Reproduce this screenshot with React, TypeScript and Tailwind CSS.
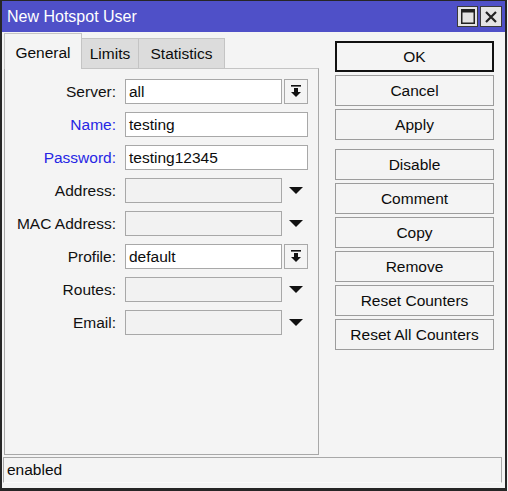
import type { ReactNode } from "react"

type Field = {
  label: string
  value?: string
  kind: "text" | "select" | "disabled"
  accent?: boolean
}

const FIELDS: Field[] = [
  { label: "Server:", value: "all", kind: "select" },
  { label: "Name:", value: "testing", kind: "text", accent: true },
  { label: "Password:", value: "testing12345", kind: "text", accent: true },
  { label: "Address:", kind: "disabled" },
  { label: "MAC Address:", kind: "disabled" },
  { label: "Profile:", value: "default", kind: "select" },
  { label: "Routes:", kind: "disabled" },
  { label: "Email:", kind: "disabled" },
]

const TOP_BUTTONS = ["OK", "Cancel", "Apply"]
const MORE_BUTTONS = ["Disable", "Comment", "Copy", "Remove", "Reset Counters", "Reset All Counters"]

function DropButton() {
  return (
    <div className="ml-[2px] flex h-[25px] w-[24px] items-center justify-center border border-[#a8a8a8] bg-[#f4f4f4]">
      <svg width="10" height="13" viewBox="0 0 10 13" aria-hidden>
        <rect x="0" y="0" width="10" height="1.6" fill="#111" />
        <rect x="3" y="3" width="4" height="4.5" fill="#111" />
        <polygon points="0,7 10,7 5,12" fill="#111" />
      </svg>
    </div>
  )
}

function PlainArrow() {
  return (
    <div className="ml-[2px] flex h-[25px] w-[24px] items-center justify-center">
      <svg width="14" height="7" viewBox="0 0 14 7" aria-hidden>
        <polygon points="0,0 14,0 7,7" fill="#111" />
      </svg>
    </div>
  )
}

function FormRow({ field }: { field: Field }) {
  let control: ReactNode
  if (field.kind === "text") {
    control = (
      <div className="flex h-[25px] w-[183px] items-center border border-[#a8a8a8] bg-white pl-[3px]">
        {field.value}
      </div>
    )
  } else if (field.kind === "select") {
    control = (
      <>
        <div className="flex h-[25px] w-[157px] items-center border border-[#a8a8a8] bg-white pl-[3px]">
          {field.value}
        </div>
        <DropButton />
      </>
    )
  } else {
    control = (
      <>
        <div className="h-[25px] w-[157px] border border-[#a8a8a8] bg-[#f2f2f2]" />
        <PlainArrow />
      </>
    )
  }

  return (
    <div className="flex h-[25px] items-center">
      <span
        className={
          "w-[111px] text-right " + (field.accent ? "text-[#2626e4]" : "text-[#111]")
        }
      >
        {field.label}
      </span>
      <div className="ml-[9px] flex items-center">{control}</div>
    </div>
  )
}

function WinButton({ label, isDefault }: { label: string; isDefault?: boolean }) {
  return (
    <button
      type="button"
      className={
        "flex h-[31px] w-full items-center justify-center bg-[#f4f4f4] text-[#0c0c0c] " +
        (isDefault ? "border-2 border-[#111]" : "border border-[#9c9c9c]")
      }
    >
      {label}
    </button>
  )
}

export default function App() {
  return (
    <div className="flex h-[491px] w-[508px] bg-[#f4f4f4] font-['Liberation_Sans',Arial,sans-serif] text-[15.5px] text-[#0c0c0c]">
      <div className="flex h-full w-[507px] flex-col border-b-[3px] border-l-2 border-r-2 border-t border-[#262626] bg-[#f4f4f4]">
        {/* title bar */}
        <div className="flex h-[31px] items-center justify-between bg-[#4f50c8] pl-[5px] pr-[3px]">
          <span className="text-[16px] text-white">New Hotspot User</span>
          <div className="flex gap-[2px]">
            <div className="flex h-[21px] w-[21px] items-center justify-center border border-[#3a3a3a] bg-[#e4e4e4]">
              <svg width="14" height="15" viewBox="0 0 14 15" aria-hidden>
                <rect x="0.75" y="0.75" width="12.5" height="13.5" fill="none" stroke="#222" strokeWidth="1.5" />
                <rect x="0" y="0" width="14" height="3.5" fill="#222" />
              </svg>
            </div>
            <div className="flex h-[21px] w-[22px] items-center justify-center border border-[#3a3a3a] bg-[#e4e4e4]">
              <svg width="12" height="12" viewBox="0 0 12 12" aria-hidden>
                <path d="M1 1 L11 11 M11 1 L1 11" stroke="#222" strokeWidth="2.2" />
              </svg>
            </div>
          </div>
        </div>

        <div className="flex flex-1 flex-col">
          <div className="mt-[1px] flex">
            {/* tabs + panel */}
            <div className="ml-[2px] flex w-[315px] flex-col">
              <div className="flex h-[35px] items-end">
                <div className="relative z-10 -mb-px flex h-[36px] w-[78px] items-center justify-center border-l border-r border-t border-[#c4c4c4] bg-[#f4f4f4] pt-[2px]">
                  General
                </div>
                <div className="flex h-[30px] w-[57px] items-center justify-center border-r border-t border-[#c4c4c4] bg-[#dcdcdc]">
                  Limits
                </div>
                <div className="flex h-[30px] w-[86px] items-center justify-center border-r border-t border-[#c4c4c4] bg-[#dcdcdc]">
                  Statistics
                </div>
              </div>
              <div className="flex h-[387px] flex-col gap-[8px] border border-[#a8a8a8] border-t-[#c4c4c4] pt-[10px]">
                {FIELDS.map((f) => (
                  <FormRow key={f.label} field={f} />
                ))}
              </div>
            </div>

            {/* buttons */}
            <div className="ml-[16px] flex w-[159px] flex-col gap-[3px] pt-[8px]">
              {TOP_BUTTONS.map((b) => (
                <WinButton key={b} label={b} isDefault={b === "OK"} />
              ))}
              <div className="h-[3px]" />
              {MORE_BUTTONS.map((b) => (
                <WinButton key={b} label={b} />
              ))}
            </div>
          </div>

          {/* status bar */}
          <div className="ml-[1px] mt-[2px] flex h-[26px] w-[499px] items-center border border-[#a8a8a8] border-b-[#fafafa] pl-[3px]">
            enabled
          </div>
        </div>
      </div>
    </div>
  )
}
